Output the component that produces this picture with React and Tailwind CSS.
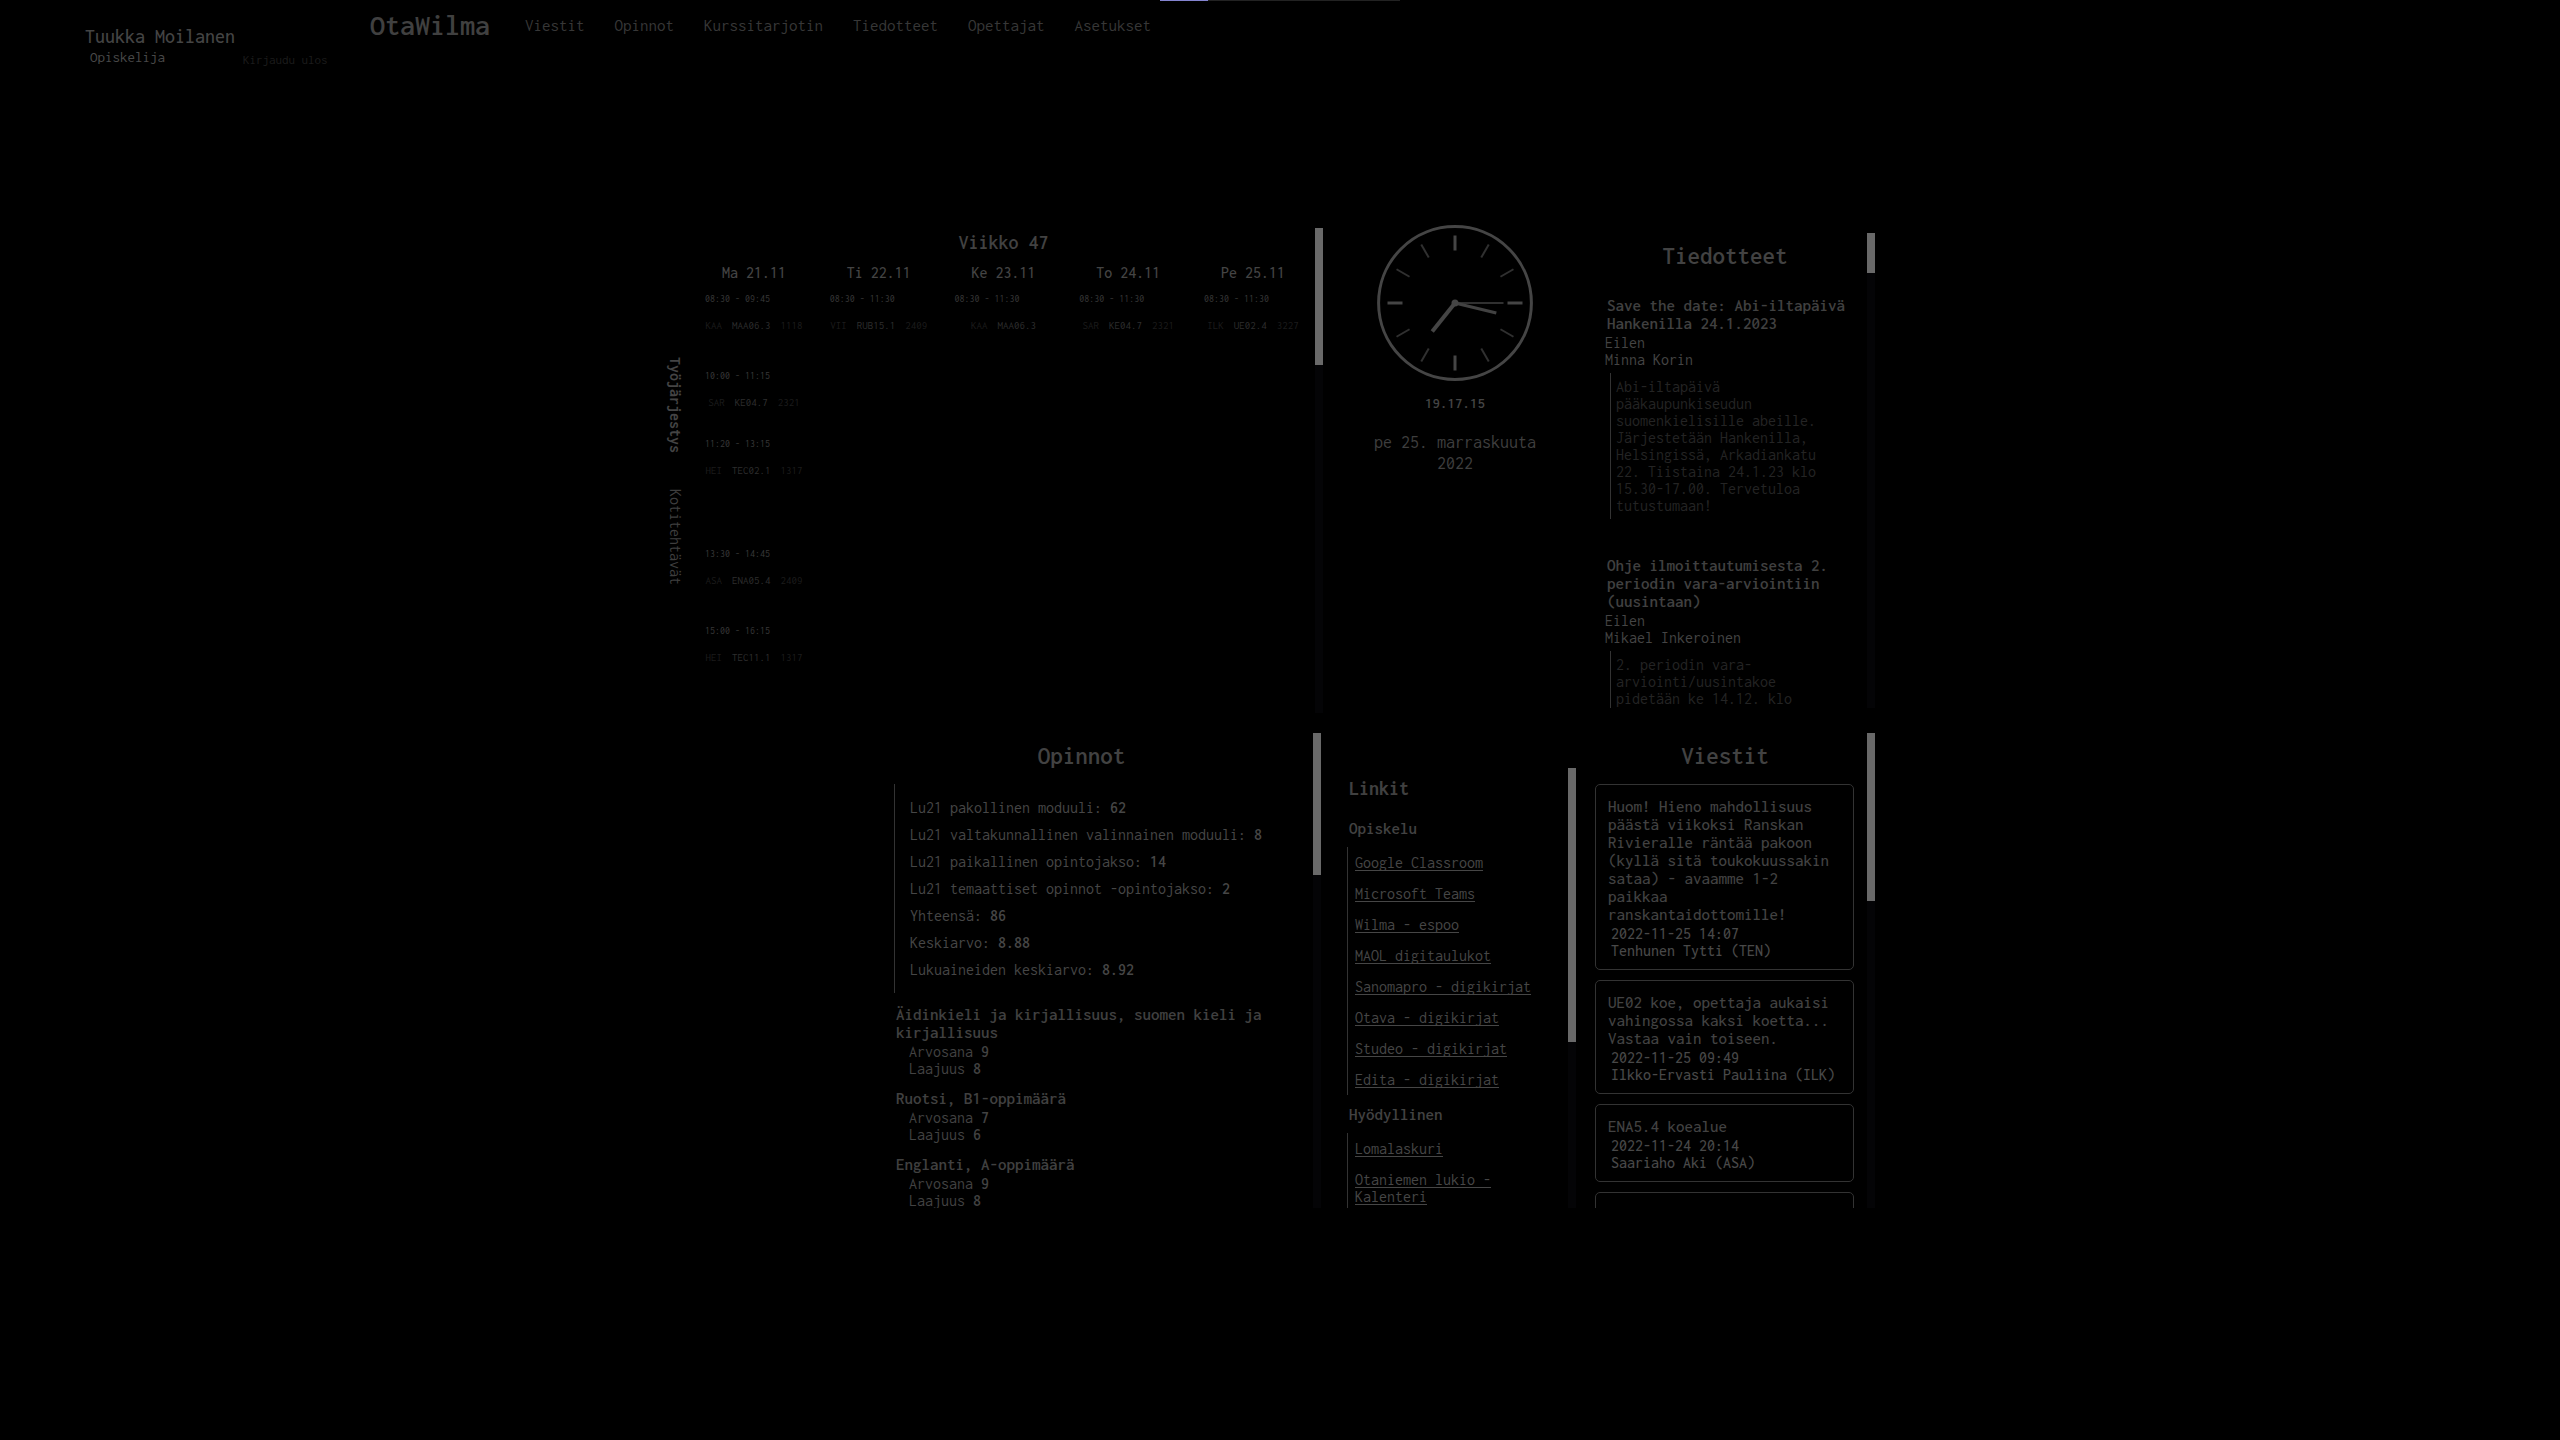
const NAV = ["Viestit", "Opinnot", "Kurssitarjotin", "Tiedotteet", "Opettajat", "Asetukset"];

const WEEK = [
  {
    day: "Ma 21.11",
    lessons: [
      { time: "08:30 - 09:45", teacher: "KAA", course: "MAA06.3", room: "1118", height: "h-[77px]" },
      { time: "10:00 - 11:15", teacher: "SAR", course: "KE04.7", room: "2321", height: "h-[68px]" },
      { time: "11:20 - 13:15", teacher: "HEI", course: "TEC02.1", room: "1317", height: "h-[110px]" },
      { time: "13:30 - 14:45", teacher: "ASA", course: "ENA05.4", room: "2409", height: "h-[77px]" },
      { time: "15:00 - 16:15", teacher: "HEI", course: "TEC11.1", room: "1317", height: "h-[77px]" },
    ],
  },
  { day: "Ti 22.11", lessons: [{ time: "08:30 - 11:30", teacher: "VII", course: "RUB15.1", room: "2409", height: "h-[154px]" }] },
  { day: "Ke 23.11", lessons: [{ time: "08:30 - 11:30", teacher: "KAA", course: "MAA06.3", room: "", height: "h-[154px]" }] },
  { day: "To 24.11", lessons: [{ time: "08:30 - 11:30", teacher: "SAR", course: "KE04.7", room: "2321", height: "h-[154px]" }] },
  { day: "Pe 25.11", lessons: [{ time: "08:30 - 11:30", teacher: "ILK", course: "UE02.4", room: "3227", height: "h-[154px]" }] },
];

const NEWS = [
  {
    title: "Save the date: Abi-iltapäivä Hankenilla 24.1.2023",
    date: "Eilen",
    author: "Minna Korin",
    body: "Abi-iltapäivä pääkaupunkiseudun suomenkielisille abeille. Järjestetään Hankenilla, Helsingissä, Arkadiankatu 22. Tiistaina 24.1.23 klo 15.30-17.00. Tervetuloa tutustumaan!",
  },
  {
    title: "Ohje ilmoittautumisesta 2. periodin vara-arviointiin (uusintaan)",
    date: "Eilen",
    author: "Mikael Inkeroinen",
    body: "2. periodin vara-arviointi/uusintakoe pidetään ke 14.12. klo",
  },
];

const CREDITS = [
  ["Lu21 pakollinen moduuli:", "62"],
  ["Lu21 valtakunnallinen valinnainen moduuli:", "8"],
  ["Lu21 paikallinen opintojakso:", "14"],
  ["Lu21 temaattiset opinnot -opintojakso:", "2"],
  ["Yhteensä:", "86"],
  ["Keskiarvo:", "8.88"],
  ["Lukuaineiden keskiarvo:", "8.92"],
];

const SUBJECTS = [
  { name: "Äidinkieli ja kirjallisuus, suomen kieli ja kirjallisuus", grade: "9", scope: "8" },
  { name: "Ruotsi, B1-oppimäärä", grade: "7", scope: "6" },
  { name: "Englanti, A-oppimäärä", grade: "9", scope: "8" },
];

const LINKS = [
  {
    title: "Opiskelu",
    items: [
      "Google Classroom",
      "Microsoft Teams",
      "Wilma - espoo",
      "MAOL digitaulukot",
      "Sanomapro - digikirjat",
      "Otava - digikirjat",
      "Studeo - digikirjat",
      "Edita - digikirjat",
    ],
  },
  { title: "Hyödyllinen", items: ["Lomalaskuri", "Otaniemen lukio - Kalenteri"] },
];

const MESSAGES = [
  {
    title:
      "Huom! Hieno mahdollisuus päästä viikoksi Ranskan Rivieralle räntää pakoon (kyllä sitä toukokuussakin sataa) - avaamme 1-2 paikkaa ranskantaidottomille!",
    date: "2022-11-25 14:07",
    sender: "Tenhunen Tytti (TEN)",
  },
  {
    title: "UE02 koe, opettaja aukaisi vahingossa kaksi koetta... Vastaa vain toiseen.",
    date: "2022-11-25 09:49",
    sender: "Ilkko-Ervasti Pauliina (ILK)",
  },
  { title: "ENA5.4 koealue", date: "2022-11-24 20:14", sender: "Saariaho Aki (ASA)" },
];

function ScrollPanel({ className, thumb, children }) {
  return (
    <section className={"flex overflow-hidden " + className}>
      <div className="min-w-0 flex-1">{children}</div>
      <div aria-hidden="true" className="w-2 shrink-0 bg-[#040406]">
        <div className={"bg-[#696969] " + thumb} />
      </div>
    </section>
  );
}

function Header() {
  return (
    <header className="flex items-start pl-[85px]">
      <div className="flex w-[285px] items-start pt-[27px]">
        <div className="w-[158px]">
          <p className="text-[20px] leading-[20px] font-medium text-[#444444]">Tuukka Moilanen</p>
          <p className="mt-[2px] pl-[5px] text-[15px] leading-[16px] text-[#484848]">Opiskelija</p>
        </div>
        <button type="button" className="mt-[26px] text-[13px] leading-[14px] text-[#1c1c1c]">
          Kirjaudu ulos
        </button>
      </div>
      <a href="#etusivu" className="mr-[35px] pt-[10px] text-[30px] leading-[30px] font-semibold text-[#404040]">
        OtaWilma
      </a>
      <nav className="flex gap-[30px] pt-4">
        {NAV.map((item) => (
          <a key={item} href={"#" + item.toLowerCase()} className="text-[17px] leading-[18px] text-[#373737]">
            {item}
          </a>
        ))}
      </nav>
    </header>
  );
}

function Tabs() {
  return (
    <div className="mt-[132px] flex w-4 flex-col items-center gap-9">
      <button type="button" className="text-[16px] leading-[16px] font-bold text-[#444444] [writing-mode:vertical-rl]">
        Työjärjestys
      </button>
      <button type="button" className="text-[16px] leading-[16px] text-[#3e3e3e] [writing-mode:vertical-rl]">
        Kotitehtävät
      </button>
    </div>
  );
}

function Lesson({ time, teacher, course, room, height }) {
  return (
    <div className={height}>
      <p className="pl-px text-[10px] leading-[10px] text-[#383838]">{time}</p>
      <div className="mt-4 flex justify-center gap-[10px] text-[11px] leading-[12px] text-[#1c1c1c]">
        <span>{teacher}</span>
        <span className="text-[#2e2e2e]">{course}</span>
        {room && <span>{room}</span>}
      </div>
    </div>
  );
}

function Timetable() {
  return (
    <ScrollPanel className="mt-[3px] ml-[21px] h-[485px] flex-1" thumb="h-[137px]">
      <div className="pt-[5px] pr-3">
        <h2 className="text-center text-[20px] leading-[20px] font-semibold text-[#424242]">Viikko 47</h2>
        <div className="mt-3 flex justify-between">
          {WEEK.map(({ day, lessons }) => (
            <div key={day} className="w-[100px]">
              <h3 className="mb-[13px] text-center text-[16px] leading-[16px] font-medium text-[#444444]">{day}</h3>
              {lessons.map((lesson) => (
                <Lesson key={lesson.time} {...lesson} />
              ))}
            </div>
          ))}
        </div>
      </div>
    </ScrollPanel>
  );
}

function Clock() {
  const hours = [0, 1, 2, 3, 4, 5, 6, 7, 8, 9, 10, 11];
  return (
    <section className="flex flex-col items-center">
      <svg width="156" height="156" viewBox="-78 -78 156 156" role="img" aria-label="Kello">
        <circle r="76.4" fill="none" stroke="#454545" strokeWidth="3" />
        {hours.map((h) => (
          <line
            key={h}
            y1="-67.5"
            y2="-52.5"
            stroke={h % 3 === 0 ? "#454545" : "#303030"}
            strokeWidth={h % 3 === 0 ? 3 : 2}
            transform={"rotate(" + h * 30 + ")"}
          />
        ))}
        <line y2="-48.5" stroke="#303030" strokeWidth="2" transform="rotate(90)" />
        <line y2="-42.5" stroke="#424242" strokeWidth="3" transform="rotate(103.5)" />
        <line y2="-36.5" stroke="#454545" strokeWidth="4" transform="rotate(218.6)" />
        <circle r="3.5" fill="#454545" />
      </svg>
      <p className="mt-[14px] text-[15px] leading-[16px] font-semibold text-[#444444]">19.17.15</p>
      <p className="mt-[21px] max-w-[200px] text-center text-[18px] leading-[21px] text-[#3e3e3e]">
        pe 25. marraskuuta 2022
      </p>
    </section>
  );
}

function News() {
  return (
    <ScrollPanel className="mt-2 h-[475px]" thumb="h-[40px]">
      <h2 className="pt-[10px] text-center text-[25px] leading-[26px] font-semibold text-[#424242]">Tiedotteet</h2>
      <div className="mt-[27px] flex flex-col gap-[37px] pr-5 pl-[22px]">
        {NEWS.map((item) => (
          <article key={item.title}>
            <h3 className="pl-[2px] text-[17px] leading-[18px] font-semibold text-[#404040]">{item.title}</h3>
            <p className="mt-[2px] text-[16px] leading-[17px] text-[#444444]">{item.date}</p>
            <p className="text-[16px] leading-[17px] text-[#444444]">{item.author}</p>
            <p className="mt-[5px] mr-[22px] ml-[5px] border-l border-[#333333] py-[5px] pl-[5px] text-[16px] leading-[17px] text-[#242424]">
              {item.body}
            </p>
          </article>
        ))}
      </div>
    </ScrollPanel>
  );
}

function Studies() {
  return (
    <ScrollPanel className="h-[475px]" thumb="h-[142px]">
      <h2 className="pt-[10px] pl-px text-center text-[25px] leading-[26px] font-semibold text-[#424242]">Opinnot</h2>
      <div className="mt-[15px] ml-[45px]">
        <ul className="border-l border-[#333333] py-[10px] pl-[15px] text-[16px] leading-[27px] text-[#464646]">
          {CREDITS.map(([label, value]) => (
            <li key={label}>
              {label} <b className="font-semibold">{value}</b>
            </li>
          ))}
        </ul>
        <div className="mt-3 flex flex-col gap-3 pl-[2px]">
          {SUBJECTS.map((s) => (
            <article key={s.name}>
              <h3 className="text-[17px] leading-[18px] font-semibold text-[#404040]">{s.name}</h3>
              <div className="mt-[2px] pl-[13px] text-[16px] leading-[17px] text-[#424242]">
                <p>
                  Arvosana <b className="font-semibold">{s.grade}</b>
                </p>
                <p>
                  Laajuus <b className="font-semibold">{s.scope}</b>
                </p>
              </div>
            </article>
          ))}
        </div>
      </div>
    </ScrollPanel>
  );
}

function Links() {
  return (
    <ScrollPanel className="mt-[35px] ml-[26px] h-[440px]" thumb="h-[274px]">
      <h2 className="mb-5 pt-[10px] pl-[2px] text-[20px] leading-[21px] font-bold text-[#404040]">Linkit</h2>
      {LINKS.map((group) => (
        <div key={group.title} className="mb-[10px]">
          <h3 className="pl-[2px] text-[17px] leading-[18px] font-semibold text-[#424242]">{group.title}</h3>
          <ul className="mt-[10px] border-l border-[#333333] pl-[7px] text-[16px] leading-[17px] text-[#464646]">
            {group.items.map((item) => (
              <li key={item} className="py-[7px]">
                <a href="#linkki" className="underline underline-offset-2 [text-decoration-skip-ink:none]">
                  {item}
                </a>
              </li>
            ))}
          </ul>
        </div>
      ))}
    </ScrollPanel>
  );
}

function Messages() {
  return (
    <ScrollPanel className="ml-[7px] h-[475px]" thumb="h-[168px]">
      <h2 className="pt-[10px] text-center text-[25px] leading-[26px] font-semibold text-[#424242]">Viestit</h2>
      <div className="mt-[15px] flex flex-col gap-[10px] pr-[13px] pl-3">
        {MESSAGES.map((m) => (
          <article key={m.title} className="rounded-[5px] border border-[#333333] pt-3 pr-3 pb-[10px] pl-3">
            <h3 className="text-[17px] leading-[18px] font-medium text-[#424242]">{m.title}</h3>
            <div className="mt-[2px] pl-[3px] text-[16px] leading-[17px] font-medium text-[#484848]">
              <p>{m.date}</p>
              <p>{m.sender}</p>
            </div>
          </article>
        ))}
        <article aria-hidden="true" className="h-[78px] rounded-[5px] border border-[#333333]" />
      </div>
    </ScrollPanel>
  );
}

export default function App() {
  return (
    <div className="min-h-screen bg-black font-['Inconsolata','Liberation_Mono',monospace]">
      <div aria-hidden="true" className="absolute inset-x-0 top-0 flex h-px justify-center">
        <div className="w-60 bg-[#222222]">
          <div className="h-px w-1/5 bg-[#8484d0]" />
        </div>
      </div>
      <Header />
      <main className="mx-auto mt-[158px] max-w-[1226px] pr-[18px]">
        <div className="grid grid-cols-[minmax(0,1fr)_256px_292px]">
          <div className="mr-1 flex">
            <Tabs />
            <Timetable />
          </div>
          <Clock />
          <News />
        </div>
        <div className="mt-5 grid grid-cols-[472px_255px_299px] justify-end">
          <Studies />
          <Links />
          <Messages />
        </div>
      </main>
    </div>
  );
}
